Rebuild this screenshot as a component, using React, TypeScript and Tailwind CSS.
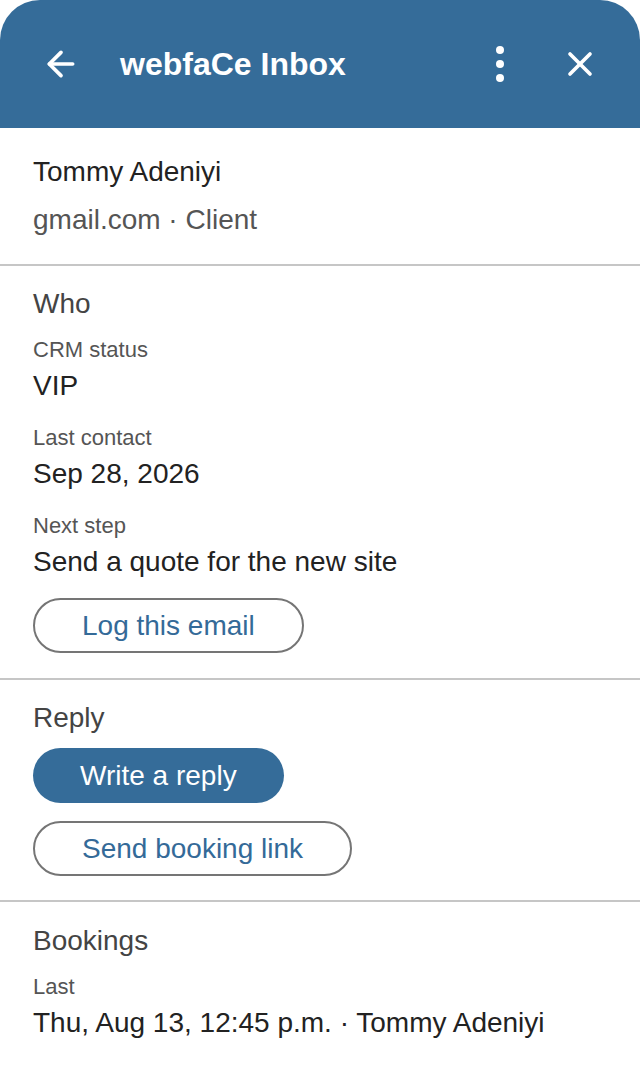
import { ArrowLeft, X } from 'lucide-react';

const Field = ({ label, value, first }: { label: string; value: string; first?: boolean }) => (
  <div className={first ? 'mt-[14px]' : 'mt-[20px]'}>
    <div className="text-[22px] leading-[28px] text-[#555]">{label}</div>
    <div className="mt-[4px] text-[28px] leading-[36px] text-[#222]">{value}</div>
  </div>
);

const OutlineButton = ({ children }: { children: string }) => (
  <button className="h-[55px] rounded-full border-2 border-[#757575] bg-white px-[47px] text-[28px] text-[#346a98]">
    {children}
  </button>
);

const Divider = () => <div className="h-[2px] bg-[#c6c6c6]" />;

export default function App() {
  return (
    <div className="min-h-screen w-[640px] bg-white" style={{ fontFamily: '"Liberation Sans", Arial, sans-serif' }}>
      <header className="flex h-[128px] items-center rounded-t-[40px] bg-[#356c99] text-white">
        <button className="ml-[41px] flex h-[40px] w-[40px] items-center justify-center">
          <ArrowLeft size={40} strokeWidth={2.2} />
        </button>
        <h1 className="ml-[39px] text-[32px] font-bold">webfaCe Inbox</h1>
        <div className="ml-auto flex h-[40px] w-[20px] flex-col items-center justify-between py-[2px]">
          <span className="h-[8px] w-[8px] rounded-full bg-white" />
          <span className="h-[8px] w-[8px] rounded-full bg-white" />
          <span className="h-[8px] w-[8px] rounded-full bg-white" />
        </div>
        <button className="ml-[50px] mr-[40px] flex h-[40px] w-[40px] items-center justify-center">
          <X size={40} strokeWidth={2.2} />
        </button>
      </header>

      <section className="px-[33px] pb-[26px] pt-[26px]">
        <div className="text-[28px] leading-[36px] text-[#222]">Tommy Adeniyi</div>
        <div className="mt-[12px] text-[28px] leading-[36px] text-[#555]">gmail.com · Client</div>
      </section>
      <Divider />

      <section className="px-[33px] pb-[25px] pt-[20px]">
        <div className="text-[28px] leading-[36px] text-[#444]">Who</div>
        <Field first label="CRM status" value="VIP" />
        <Field label="Last contact" value="Sep 28, 2026" />
        <Field label="Next step" value="Send a quote for the new site" />
        <div className="mt-[18px]">
          <OutlineButton>Log this email</OutlineButton>
        </div>
      </section>
      <Divider />

      <section className="px-[33px] pb-[24px] pt-[20px]">
        <div className="text-[28px] leading-[36px] text-[#444]">Reply</div>
        <div className="mt-[12px] flex flex-col items-start gap-[18px]">
          <button className="h-[55px] rounded-full bg-[#356c99] px-[47px] text-[28px] text-white">Write a reply</button>
          <OutlineButton>Send booking link</OutlineButton>
        </div>
      </section>
      <Divider />

      <section className="px-[33px] pb-[30px] pt-[21px]">
        <div className="text-[28px] leading-[36px] text-[#444]">Bookings</div>
        <Field first label="Last" value="Thu, Aug 13, 12:45 p.m. · Tommy Adeniyi" />
      </section>
    </div>
  );
}
